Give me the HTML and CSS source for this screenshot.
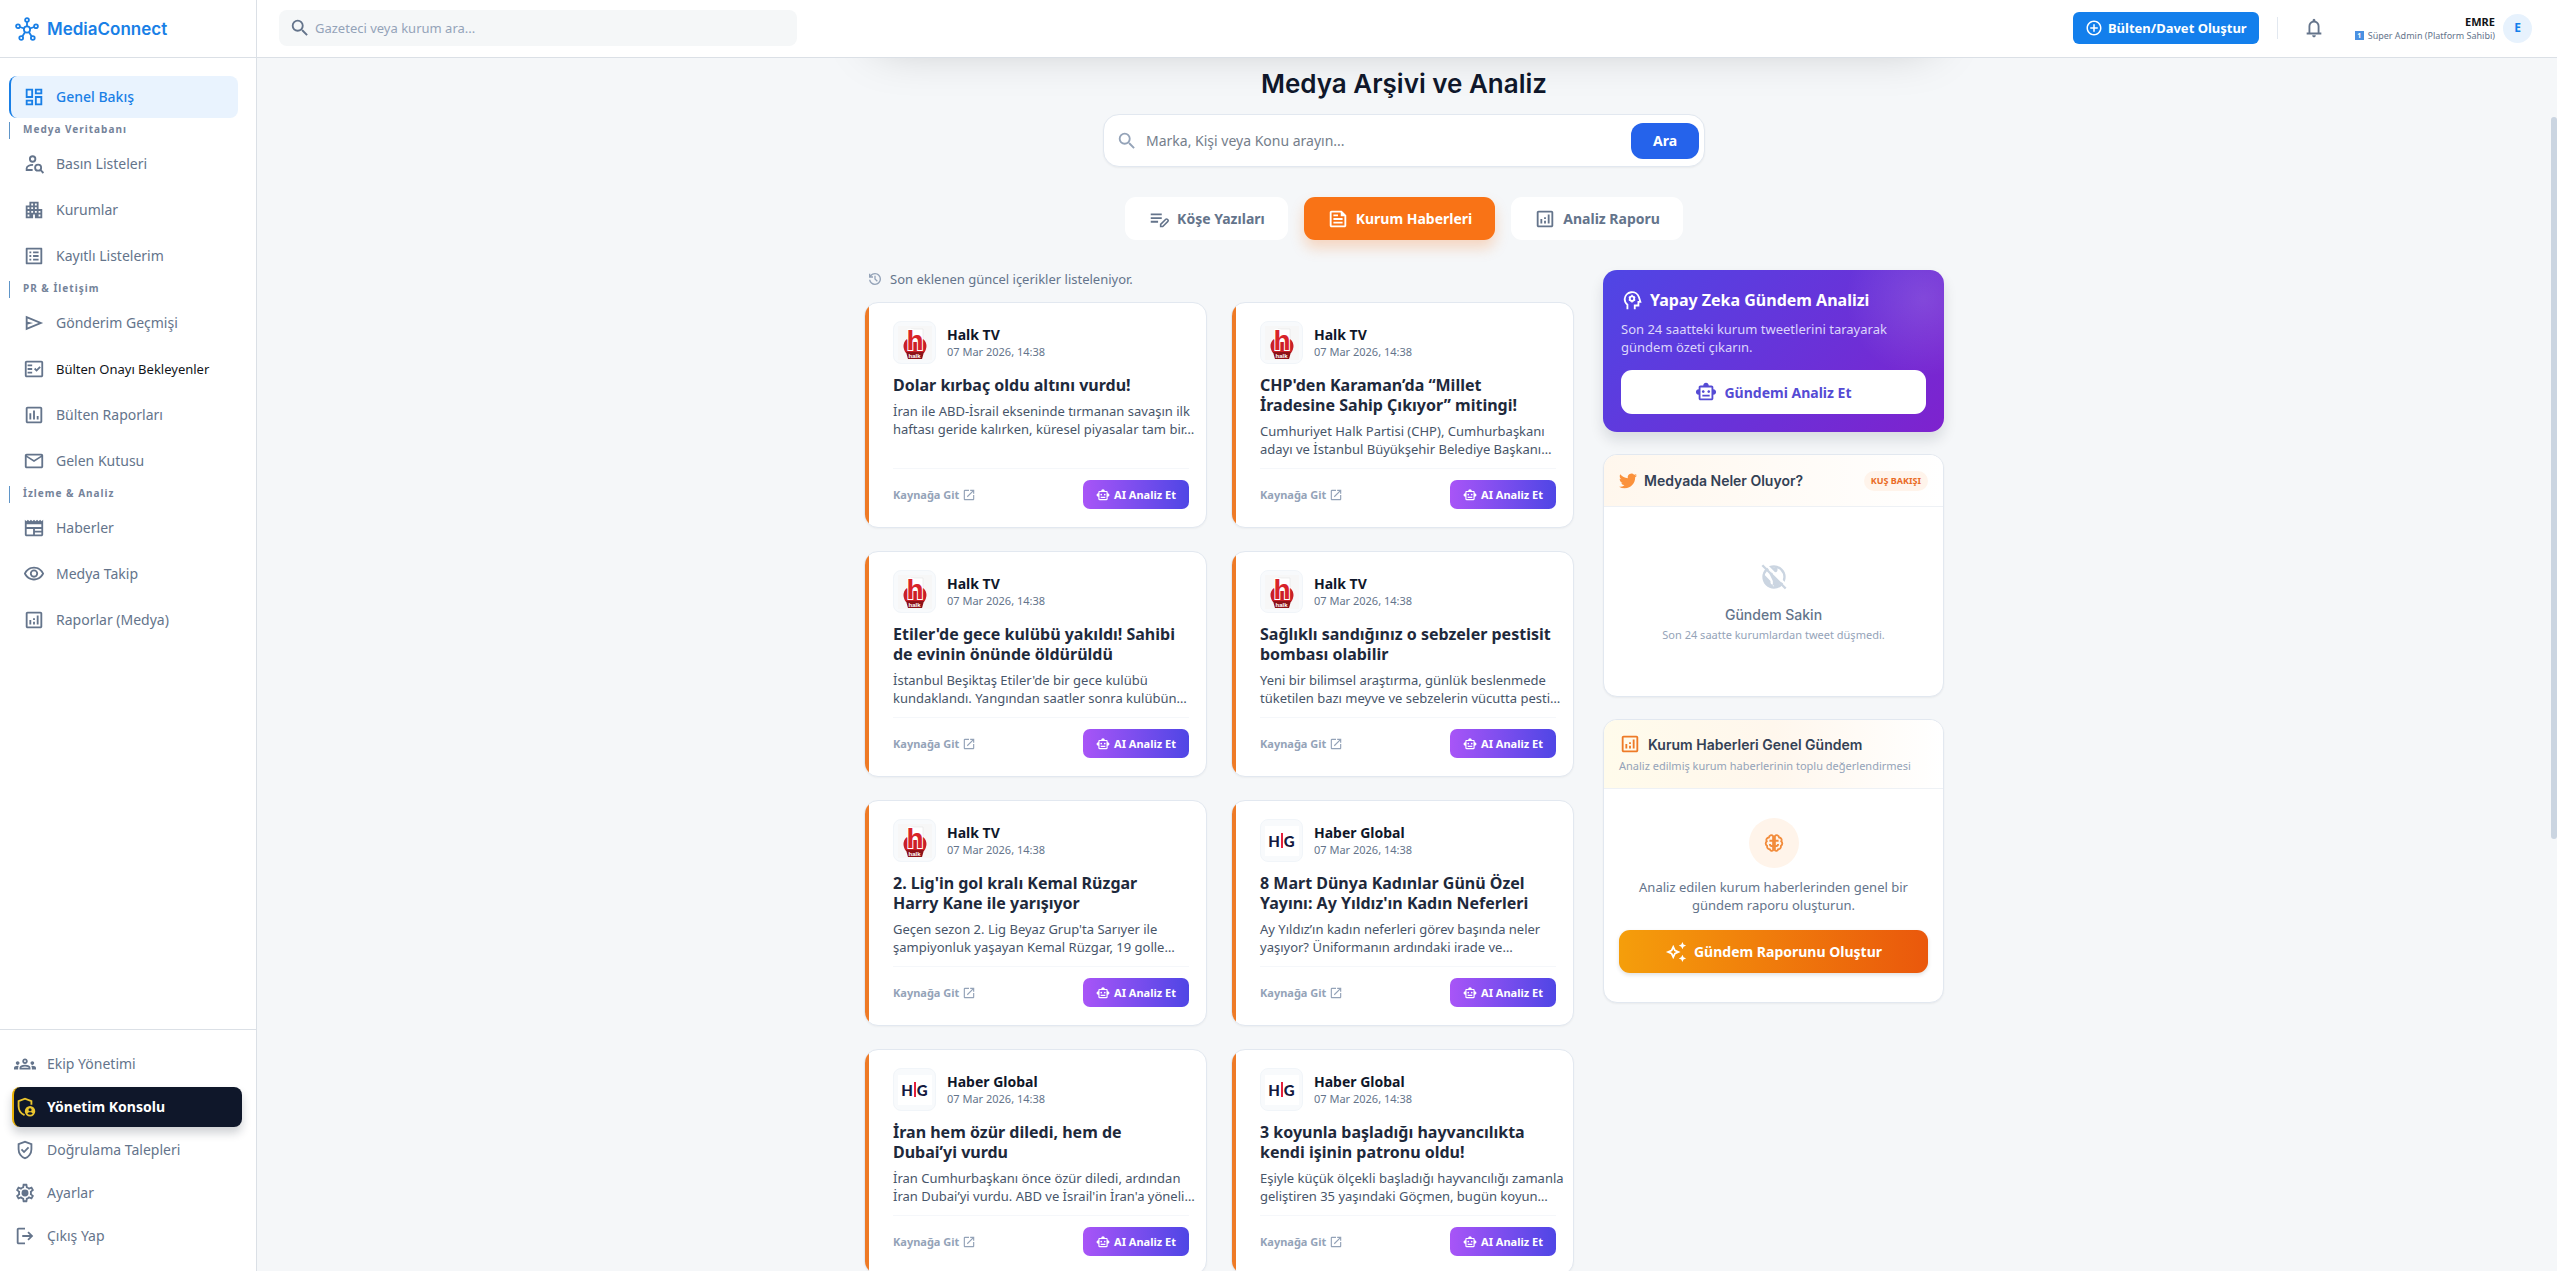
FILE: index.html
```html
<!DOCTYPE html>
<html lang="tr">
<head>
<meta charset="UTF-8">
<meta name="viewport" content="width=device-width, initial-scale=1.0">
<title>MediaConnect - Genel Bakış</title>
<link rel="stylesheet" href="styles.css">
</head>
<body>
<!-- icon set -->
<svg class="sprite" aria-hidden="true">
    <symbol id="i-hub" viewBox="0 0 24 24"><g fill="none" stroke="currentColor" stroke-width="1.8"><circle cx="12" cy="12.5" r="3.1"/><circle cx="12" cy="3" r="1.9"/><circle cx="3" cy="9.3" r="1.9"/><circle cx="21" cy="9.3" r="1.9"/><circle cx="6.2" cy="21" r="1.9"/><circle cx="17.8" cy="21" r="1.9"/><path d="M12 5v4.4M4.9 10l4.2 1.5M19.100 10l-4.200 1.500M7.300 19.400l2.800-4.300M16.700 19.400l-2.800-4.300"/></g></symbol>
    <symbol id="i-search" viewBox="0 0 24 24"><path d="M15.500 14h-.79l-.28-.27A6.471 6.471 0 0 0 16 9.500 6.500 6.500 0 1 0 9.500 16c1.610 0 3.090-.59 4.230-1.570l.27.28v.79l5 4.990L20.490 19l-4.990-5zm-6 0C7.010 14 5 11.990 5 9.500S7.010 5 9.500 5 14 7.010 14 9.500 11.990 14 9.500 14z"/></symbol>
    <symbol id="i-dashboard" viewBox="0 0 24 24"><path d="M19 5v2h-4V5h4M9 5v6H5V5h4m10 8v6h-4v-6h4M9 17v2H5v-2h4M21 3h-8v6h8V3zM11 3H3v10h8V3zm10 8h-8v10h8V11zm-10 4H3v6h8v-6z"/></symbol>
    <symbol id="i-person-search" viewBox="0 0 24 24"><g fill="none" stroke="currentColor" stroke-width="2"><circle cx="10.500" cy="6.500" r="3"/><path d="M11 13c-3.500-.2-7 1.500-7 3.600V18.500h6.500"/><circle cx="16.500" cy="16" r="3.300"/><path d="M19 18.500l3.300 3.300"/></g></symbol>
    <symbol id="i-building" viewBox="0 0 24 24"><path d="M17 11V3H7v4H3v14h8v-4h2v4h8V11h-4zM7 19H5v-2h2v2zm0-4H5v-2h2v2zm0-4H5V9h2v2zm4 4H9v-2h2v2zm0-4H9V9h2v2zm0-4H9V5h2v2zm4 8h-2v-2h2v2zm0-4h-2V9h2v2zm0-4h-2V5h2v2zm4 12h-2v-2h2v2zm0-4h-2v-2h2v2z"/></symbol>
    <symbol id="i-list" viewBox="0 0 24 24"><path d="M19 5v14H5V5h14m1.100-2H3.900c-.5 0-.9.4-.9.9v16.200c0 .4.4.9.9.9h16.200c.4 0 .9-.5.9-.9V3.900c0-.5-.5-.9-.9-.9zM11 7h6v2h-6V7zm0 4h6v2h-6v-2zm0 4h6v2h-6zM7 7h2v2H7zm0 4h2v2H7zm0 4h2v2H7z"/></symbol>
    <symbol id="i-send" viewBox="0 0 24 24"><path d="M3 20V4l19 8-19 8zm2-3 11.850-5L5 7v3.500l6 1.500-6 1.500V17z"/></symbol>
    <symbol id="i-check" viewBox="0 0 24 24"><path d="M20 3H4c-1.100 0-2 .9-2 2v14c0 1.100.9 2 2 2h16c1.100 0 2-.9 2-2V5c0-1.100-.9-2-2-2zm0 16H4V5h16v14zM19.410 10.420 17.990 9l-3.170 3.170-1.410-1.420L12 12.160 14.820 15zM5 7h5v2H5zm0 4h5v2H5zm0 4h5v2H5z"/></symbol>
    <symbol id="i-chart" viewBox="0 0 24 24"><path d="M9 17H7v-7h2v7zm4 0h-2V7h2v10zm4 0h-2v-4h2v4zm2 2H5V5h14v14zm0-16H5c-1.100 0-2 .9-2 2v14c0 1.100.9 2 2 2h14c1.100 0 2-.9 2-2V5c0-1.100-.9-2-2-2z"/></symbol>
    <symbol id="i-mail" viewBox="0 0 24 24"><path d="M22 6c0-1.100-.9-2-2-2H4c-1.100 0-2 .9-2 2v12c0 1.100.9 2 2 2h16c1.100 0 2-.9 2-2V6zm-2 0-8 5-8-5h16zm0 12H4V8l8 5 8-5v10z"/></symbol>
    <symbol id="i-news" viewBox="0 0 24 24"><path d="M22 3l-1.670 1.670L18.670 3 17 4.670 15.330 3l-1.660 1.670L12 3l-1.670 1.670L8.670 3 7 4.670 5.330 3 3.670 4.670 2 3v16c0 1.100.9 2 2 2h16c1.100 0 2-.9 2-2V3zM11 19H4v-6h7v6zm9 0h-7v-2h7v2zm0-4h-7v-2h7v2zm0-4H4V8h16v3z"/></symbol>
    <symbol id="i-eye" viewBox="0 0 24 24"><path d="M12 6c3.790 0 7.170 2.130 8.820 5.500C19.170 14.870 15.790 17 12 17s-7.170-2.130-8.820-5.500C4.830 8.130 8.210 6 12 6m0-2C7 4 2.730 7.110 1 11.500 2.730 15.890 7 19 12 19s9.270-3.110 11-7.500C21.270 7.110 17 4 12 4zm0 5a2.500 2.500 0 0 1 0 5 2.500 2.500 0 0 1 0-5m0-2c-2.480 0-4.500 2.020-4.500 4.500S9.520 16 12 16s4.500-2.020 4.500-4.500S14.480 7 12 7z"/></symbol>
    <symbol id="i-analytics" viewBox="0 0 24 24"><path d="M19 3H5c-1.100 0-2 .9-2 2v14c0 1.100.9 2 2 2h14c1.100 0 2-.9 2-2V5c0-1.100-.9-2-2-2zm0 16H5V5h14v14zM7 12h2v5H7zm8-5h2v10h-2zm-4 7h2v3h-2zm0-4h2v2h-2z"/></symbol>
    <symbol id="i-groups" viewBox="0 0 24 24"><path d="M4 13c1.100 0 2-.9 2-2s-.9-2-2-2-2 .9-2 2 .9 2 2 2zm1.130 1.100C4.760 14.040 4.390 14 4 14c-.99 0-1.930.21-2.780.58C.48 14.900 0 15.620 0 16.430V18h4.500v-1.610c0-.83.23-1.610.63-2.290zM20 13c1.100 0 2-.9 2-2s-.9-2-2-2-2 .9-2 2 .9 2 2 2zm4 3.430c0-.81-.48-1.530-1.220-1.850C21.930 14.210 20.990 14 20 14c-.39 0-.76.04-1.130.1.4.68.63 1.460.63 2.290V18H24v-1.570zM16.240 13.650C15.070 13.130 13.630 12.750 12 12.750s-3.070.39-4.240.9C6.680 14.130 6 15.210 6 16.390V18h12v-1.610c0-1.180-.68-2.260-1.760-2.740zM8.070 16c.09-.23.13-.39.91-.69.97-.38 1.990-.56 3.020-.56s2.050.18 3.020.56c.77.3.81.46.91.69H8.070zM12 8c.55 0 1 .45 1 1s-.45 1-1 1-1-.45-1-1 .45-1 1-1m0-2c-1.660 0-3 1.340-3 3s1.340 3 3 3 3-1.340 3-3-1.340-3-3-3z"/></symbol>
    <symbol id="i-admin" viewBox="0 0 24 24"><path fill="none" stroke="currentColor" stroke-width="2" d="M19 9.500V5.700L12 3 5 5.700v5.400c0 4.500 2.500 8 6.500 9.700"/><path fill-rule="evenodd" d="M17.500 11a5.700 5.700 0 1 0 0 11.400 5.700 5.700 0 0 0 0-11.400zm0 2.300a1.700 1.700 0 1 1 0 3.400 1.700 1.700 0 0 1 0-3.400zm0 4.400c1.200 0 2.200.5 2.900 1.300a3.600 3.600 0 0 1-5.800 0c.7-.8 1.700-1.300 2.900-1.300z"/></symbol>
    <symbol id="i-verified" viewBox="0 0 24 24"><path d="M10.950 15.550 16.600 9.900l-1.425-1.425L10.950 12.700 8.850 10.600 7.425 12.025zM12 22q-3.475-.875-5.738-3.988T4 11.100V5l8-3 8 3v6.100q0 3.800-2.262 6.913T12 22m0-2.100q2.600-.825 4.300-3.300t1.700-5.500V6.375l-6-2.250-6 2.250V11.100q0 3.025 1.700 5.500t4.300 3.300"/></symbol>
    <symbol id="i-settings" viewBox="0 0 24 24"><path d="M19.430 12.980c.04-.32.07-.64.07-.98 0-.34-.03-.66-.07-.98l2.110-1.650c.19-.15.24-.42.12-.64l-2-3.460a.5.5 0 0 0-.61-.22l-2.490 1c-.52-.4-1.080-.73-1.690-.98l-.38-2.650A.488.488 0 0 0 14 2h-4c-.25 0-.46.18-.49.42l-.38 2.650c-.61.25-1.170.59-1.690.98l-2.490-1a.566.566 0 0 0-.18-.03c-.17 0-.34.09-.43.25l-2 3.460c-.13.22-.07.49.12.64l2.110 1.650c-.04.32-.07.65-.07.98 0 .33.03.66.07.98l-2.110 1.650c-.19.15-.24.42-.12.64l2 3.460a.5.5 0 0 0 .61.22l2.490-1c.52.4 1.080.73 1.690.98l.38 2.650c.03.24.24.42.49.42h4c.25 0 .46-.18.49-.42l.38-2.650c.61-.25 1.170-.59 1.690-.98l2.490 1c.06.02.12.03.18.03.17 0 .34-.09.43-.25l2-3.460c.12-.22.07-.49-.12-.64l-2.110-1.650zm-1.980-1.710c.04.31.05.52.05.73 0 .21-.02.43-.05.73l-.14 1.130.89.7 1.080.84-.7 1.210-1.270-.51-1.040-.42-.9.68c-.43.32-.84.56-1.250.73l-1.060.43-.16 1.130-.2 1.350h-1.400l-.19-1.350-.16-1.130-1.060-.43c-.43-.18-.83-.41-1.230-.71l-.91-.7-1.060.43-1.270.51-.7-1.210 1.080-.84.89-.7-.14-1.130c-.03-.31-.05-.54-.05-.74s.02-.43.05-.73l.14-1.130-.89-.7-1.080-.84.7-1.210 1.270.51 1.040.42.9-.68c.43-.32.84-.56 1.250-.73l1.060-.43.16-1.130.2-1.350h1.390l.19 1.350.16 1.130 1.060.43c.43.18.83.41 1.230.71l.91.7 1.060-.43 1.270-.51.7 1.210-1.070.85-.89.7.14 1.130z"/><circle cx="12" cy="12" r="3.800"/></symbol>
    <symbol id="i-logout" viewBox="0 0 24 24"><path d="M5 21q-.825 0-1.412-.587T3 19V5q0-.825.588-1.412T5 3h7v2H5v14h7v2zm11-4-1.375-1.450 2.550-2.550H9v-2h8.175l-2.550-2.550L16 7l5 5z"/></symbol>
    <symbol id="i-add" viewBox="0 0 24 24"><path d="M13 7h-2v4H7v2h4v4h2v-4h4v-2h-4V7zm-1-5C6.480 2 2 6.480 2 12s4.480 10 10 10 10-4.480 10-10S17.520 2 12 2zm0 18c-4.410 0-8-3.590-8-8s3.590-8 8-8 8 3.590 8 8-3.590 8-8 8z"/></symbol>
    <symbol id="i-bell" viewBox="0 0 24 24"><path d="M4 19v-2h2v-7q0-2.075 1.250-3.687T10.500 4.200v-.7q0-.625.438-1.062T12 2t1.063.438T13.500 3.500v.7q2 .5 3.250 2.113T18 10v7h2v2zm8 3q-.825 0-1.412-.587T10 20h4q0 .825-.587 1.413T12 22m-4-5h8v-7q0-1.650-1.175-2.825T12 6 9.175 7.175 8 10z"/></symbol>
    <symbol id="i-edit-note" viewBox="0 0 24 24"><path d="M3 10h12v2H3v-2zm0-4h12v2H3V6zm0 8h8v2H3v-2z"/><path fill="none" stroke="currentColor" stroke-width="1.700" d="M13.800 20.200v-2.300l5.600-5.600c.5-.5 1.300-.5 1.700 0l.6.6c.5.5.5 1.200 0 1.700l-5.600 5.600z"/></symbol>
    <symbol id="i-feed" viewBox="0 0 24 24"><path d="M16 3H5c-1.100 0-2 .9-2 2v14c0 1.100.9 2 2 2h14c1.100 0 2-.9 2-2V8l-5-5zm3 16H5V5h10v4h4v10zM7 17h10v-2H7v2zm5-10H7v2h5V7zm-5 6h10v-2H7v2z"/></symbol>
    <symbol id="i-history" viewBox="0 0 24 24"><path d="M12 21q-3.450 0-6.012-2.287T3.050 13H5.100q.35 2.600 2.313 4.300T12 19q2.925 0 4.963-2.037T19 12t-2.037-4.962T12 5q-1.725 0-3.225.8T6.250 8H9v2H3V4h2v2.350q1.275-1.600 3.113-2.475T12 3q1.875 0 3.513.713t2.850 1.924 1.925 2.850T21 12t-.712 3.513-1.925 2.850-2.850 1.925T12 21m2.800-4.800L11 12.400V7h2v4.600l3.200 3.200z"/></symbol>
    <symbol id="i-open" viewBox="0 0 24 24"><path d="M5 21q-.825 0-1.412-.587T3 19V5q0-.825.588-1.412T5 3h7v2H5v14h14v-7h2v7q0 .825-.587 1.413T19 21zm4.700-5.300-1.400-1.400L17.600 5H14V3h7v7h-2V6.400z"/></symbol>
    <symbol id="i-robot" viewBox="0 0 24 24"><path d="M20 9V7c0-1.100-.9-2-2-2h-3c0-1.660-1.340-3-3-3S9 3.340 9 5H6c-1.100 0-2 .9-2 2v2c-1.660 0-3 1.340-3 3s1.340 3 3 3v4c0 1.100.9 2 2 2h12c1.100 0 2-.9 2-2v-4c1.660 0 3-1.340 3-3s-1.340-3-3-3zm-2 10H6V7h12v12zm-9-6c-.83 0-1.500-.67-1.500-1.500S8.170 10 9 10s1.500.67 1.500 1.500S9.830 13 9 13zm7.500-1.500c0 .83-.67 1.500-1.500 1.500s-1.500-.67-1.500-1.500.67-1.500 1.500-1.500 1.500.67 1.500 1.500zM8 15h8v2H8v-2z"/></symbol>
    <symbol id="i-psychology" viewBox="0 0 24 24"><g fill="none" stroke="currentColor" stroke-width="2"><path d="M7 22v-4.800C5 15.600 4 13.500 4 11a8 8 0 0 1 15.600-2l1.500 5H19v4h-4v4"/><circle cx="12" cy="10.500" r="2.400"/><path stroke-width="1.600" d="M12 6.400v1.800M12 12.800v1.800M8.500 8.500l1.600.9M13.900 11.600l1.600.9M8.500 12.500l1.600-.9M13.900 9.400l1.600-.9"/></g></symbol>
    <symbol id="i-bird" viewBox="0 0 24 24"><path d="M23.953 4.570a10 10 0 0 1-2.825.775 4.958 4.958 0 0 0 2.163-2.723c-.951.555-2.005.959-3.127 1.184a4.920 4.920 0 0 0-8.384 4.482C7.690 8.095 4.067 6.130 1.640 3.162a4.822 4.822 0 0 0-.666 2.475c0 1.710.87 3.213 2.188 4.096a4.904 4.904 0 0 1-2.228-.616v.06a4.923 4.923 0 0 0 3.946 4.827 4.996 4.996 0 0 1-2.212.085 4.936 4.936 0 0 0 4.604 3.417 9.867 9.867 0 0 1-6.102 2.105c-.39 0-.779-.023-1.170-.067a13.995 13.995 0 0 0 7.557 2.209c9.053 0 13.998-7.496 13.998-13.985 0-.21 0-.42-.015-.63A9.935 9.935 0 0 0 24 4.590z"/></symbol>
    <symbol id="i-public-off" viewBox="0 0 24 24"><circle cx="12" cy="12" r="9" fill="none" stroke="currentColor" stroke-width="2"/><path d="M8 4h7v2c0 1.100-.9 2-2 2h-2v2zM3.200 9.500 9 15.500v1c0 1.100.9 2 2 2v3c-5-.5-8.500-5-7.800-12zM8 9h2l7 7v3l-4 2.500-2-3v-3z"/><path stroke="#fff" stroke-width="2" d="M4.300.8l19 19"/><path stroke="currentColor" stroke-width="2" d="M2 1.900 22 21.900"/></symbol>
    <symbol id="i-brain" viewBox="0 0 24 24"><g fill="none" stroke="currentColor" stroke-width="2" stroke-linejoin="round"><path d="M11 4.500C9.500 2.500 6.500 3.500 6.500 6 4 6 3 8.500 4.200 10.200 2.500 11.500 2.500 14 4.500 15c-.5 2.500 1.300 4 3 3.800.5 2 2.500 2.200 3.500 1.200zM13 4.500c1.500-2 4.500-1 4.500 1.500C20 6 21 8.500 19.800 10.200c1.700 1.300 1.700 3.800-.3 4.800.5 2.500-1.300 4-3 3.800-.5 2-2.500 2.200-3.500 1.200z"/><path d="M11 9.500H7M13 9.500h4M11 15.500c-1.500 0-3.500-.5-3.500-2.500M13 15.500c1.500 0 3.500-.5 3.500-2.500"/></g></symbol>
    <symbol id="i-sparkle" viewBox="0 0 24 24"><path d="M19 9l1.250-2.750L23 5l-2.750-1.250L19 1l-1.250 2.750L15 5l2.750 1.250zm0 6-1.250 2.750L15 19l2.750 1.250L19 23l1.250-2.750L23 19l-2.750-1.250zM11.500 9.500 9 4 6.500 9.500 1 12l5.500 2.500L9 20l2.500-5.500L17 12zm-1.510 3.490L9 15.170l-.99-2.180L5.830 12l2.180-.99L9 8.830l.99 2.180 2.180.99z"/></symbol>
    <symbol id="logo-halk" viewBox="0 0 34 34"><rect width="34" height="34" fill="#f7f7f7"/><path fill="#fff" stroke="#ddd" stroke-width=".5" d="M13 3h12v14H13z"/><path fill="#c91f26" d="M9 13c-5 4-4 10-1 14h18c3-4 4-10-1-14l-3 3H12z"/><path fill="#8e1218" d="M8 26h18l-2 7H10z"/></symbol>
</svg>

<div class="app">
    <aside class="sidebar">
        <a class="brand" href="#"><svg class="icon icon-24"><use href="#i-hub"/></svg><span>MediaConnect</span></a>
        <nav class="nav">
            <a class="nav-item active" href="#"><svg class="icon icon-22"><use href="#i-dashboard"/></svg>Genel Bakış</a>
            <h2 class="nav-label">Medya Veritabanı</h2>
            <a class="nav-item" href="#"><svg class="icon icon-22"><use href="#i-person-search"/></svg>Basın Listeleri</a>
            <a class="nav-item" href="#"><svg class="icon icon-22"><use href="#i-building"/></svg>Kurumlar</a>
            <a class="nav-item" href="#"><svg class="icon icon-22"><use href="#i-list"/></svg>Kayıtlı Listelerim</a>
            <h2 class="nav-label">PR &amp; İletişim</h2>
            <a class="nav-item" href="#"><svg class="icon icon-22"><use href="#i-send"/></svg>Gönderim Geçmişi</a>
            <a class="nav-item" href="#"><svg class="icon icon-22"><use href="#i-check"/></svg><span class="pending">Bülten Onayı Bekleyenler</span></a>
            <a class="nav-item" href="#"><svg class="icon icon-22"><use href="#i-chart"/></svg>Bülten Raporları</a>
            <a class="nav-item" href="#"><svg class="icon icon-22"><use href="#i-mail"/></svg>Gelen Kutusu</a>
            <h2 class="nav-label">İzleme &amp; Analiz</h2>
            <a class="nav-item" href="#"><svg class="icon icon-22"><use href="#i-news"/></svg>Haberler</a>
            <a class="nav-item" href="#"><svg class="icon icon-22"><use href="#i-eye"/></svg>Medya Takip</a>
            <a class="nav-item" href="#"><svg class="icon icon-22"><use href="#i-analytics"/></svg>Raporlar (Medya)</a>
        </nav>
        <nav class="nav-bottom">
            <a class="bottom-item" href="#"><svg class="icon icon-22"><use href="#i-groups"/></svg>Ekip Yönetimi</a>
            <a class="bottom-item console" href="#"><svg class="icon icon-22"><use href="#i-admin"/></svg>Yönetim Konsolu</a>
            <a class="bottom-item" href="#"><svg class="icon icon-22"><use href="#i-verified"/></svg>Doğrulama Talepleri</a>
            <a class="bottom-item" href="#"><svg class="icon icon-22"><use href="#i-settings"/></svg>Ayarlar</a>
            <a class="bottom-item" href="#"><svg class="icon icon-22"><use href="#i-logout"/></svg>Çıkış Yap</a>
        </nav>
    </aside>

    <div class="page">
        <header class="topbar">
            <label class="top-search">
                <svg class="icon icon-22"><use href="#i-search"/></svg>
                <input type="text" placeholder="Gazeteci veya kurum ara..." aria-label="Gazeteci veya kurum ara">
            </label>
            <div class="top-actions">
                <button class="btn-create"><svg class="icon icon-18"><use href="#i-add"/></svg>Bülten/Davet Oluştur</button>
                <span class="divider"></span>
                <button class="btn-bell" aria-label="Bildirimler"><svg class="icon icon-22"><use href="#i-bell"/></svg></button>
                <div class="user">
                    <div class="user-text">
                        <span class="user-name">EMRE</span>
                        <span class="user-role"><span class="level">1</span>Süper Admin (Platform Sahibi)</span>
                    </div>
                    <span class="avatar">E</span>
                </div>
            </div>
        </header>

        <main class="main">
            <div class="content">
                <section class="hero"></section>
                <h1 class="title">Medya Arşivi ve Analiz</h1>
                <form class="search">
                    <svg class="icon icon-22"><use href="#i-search"/></svg>
                    <input type="text" placeholder="Marka, Kişi veya Konu arayın..." aria-label="Marka, Kişi veya Konu arayın">
                    <button type="button">Ara</button>
                </form>
                <div class="tabs">
                    <button class="tab"><svg class="icon icon-22"><use href="#i-edit-note"/></svg>Köşe Yazıları</button>
                    <button class="tab active"><svg class="icon icon-22"><use href="#i-feed"/></svg>Kurum Haberleri</button>
                    <button class="tab"><svg class="icon icon-22"><use href="#i-analytics"/></svg>Analiz Raporu</button>
                </div>

                <div class="columns">
                    <section class="feed">
                        <p class="status"><svg class="icon icon-16"><use href="#i-history"/></svg>Son eklenen güncel içerikler listeleniyor.</p>
                        <div class="cards">
                            <article class="card">
                                <div class="source"><span class="logo"><span class="logo-halk"><svg><use href="#logo-halk"/></svg><b>h</b><small>halk</small></span></span><div><h3>Halk TV</h3><time>07 Mar 2026, 14:38</time></div></div>
                                <h4>Dolar kırbaç oldu altını vurdu!</h4>
                                <p>İran ile ABD-İsrail ekseninde tırmanan savaşın ilk haftası geride kalırken, küresel piyasalar tam bir…</p>
                                <div class="card-foot"><a href="#">Kaynağa Git<svg class="icon icon-14"><use href="#i-open"/></svg></a><button><svg class="icon icon-14"><use href="#i-robot"/></svg>AI Analiz Et</button></div>
                            </article>
                            <article class="card">
                                <div class="source"><span class="logo"><span class="logo-halk"><svg><use href="#logo-halk"/></svg><b>h</b><small>halk</small></span></span><div><h3>Halk TV</h3><time>07 Mar 2026, 14:38</time></div></div>
                                <h4>CHP'den Karaman’da “Millet İradesine Sahip Çıkıyor” mitingi!</h4>
                                <p>Cumhuriyet Halk Partisi (CHP), Cumhurbaşkanı adayı ve İstanbul Büyükşehir Belediye Başkanı…</p>
                                <div class="card-foot"><a href="#">Kaynağa Git<svg class="icon icon-14"><use href="#i-open"/></svg></a><button><svg class="icon icon-14"><use href="#i-robot"/></svg>AI Analiz Et</button></div>
                            </article>
                            <article class="card">
                                <div class="source"><span class="logo"><span class="logo-halk"><svg><use href="#logo-halk"/></svg><b>h</b><small>halk</small></span></span><div><h3>Halk TV</h3><time>07 Mar 2026, 14:38</time></div></div>
                                <h4>Etiler'de gece kulübü yakıldı! Sahibi de evinin önünde öldürüldü</h4>
                                <p>İstanbul Beşiktaş Etiler'de bir gece kulübü kundaklandı. Yangından saatler sonra kulübün…</p>
                                <div class="card-foot"><a href="#">Kaynağa Git<svg class="icon icon-14"><use href="#i-open"/></svg></a><button><svg class="icon icon-14"><use href="#i-robot"/></svg>AI Analiz Et</button></div>
                            </article>
                            <article class="card">
                                <div class="source"><span class="logo"><span class="logo-halk"><svg><use href="#logo-halk"/></svg><b>h</b><small>halk</small></span></span><div><h3>Halk TV</h3><time>07 Mar 2026, 14:38</time></div></div>
                                <h4>Sağlıklı sandığınız o sebzeler pestisit bombası olabilir</h4>
                                <p>Yeni bir bilimsel araştırma, günlük beslenmede tüketilen bazı meyve ve sebzelerin vücutta pesti…</p>
                                <div class="card-foot"><a href="#">Kaynağa Git<svg class="icon icon-14"><use href="#i-open"/></svg></a><button><svg class="icon icon-14"><use href="#i-robot"/></svg>AI Analiz Et</button></div>
                            </article>
                            <article class="card">
                                <div class="source"><span class="logo"><span class="logo-halk"><svg><use href="#logo-halk"/></svg><b>h</b><small>halk</small></span></span><div><h3>Halk TV</h3><time>07 Mar 2026, 14:38</time></div></div>
                                <h4>2. Lig'in gol kralı Kemal Rüzgar<br>Harry Kane ile yarışıyor</h4>
                                <p>Geçen sezon 2. Lig Beyaz Grup'ta Sarıyer ile şampiyonluk yaşayan Kemal Rüzgar, 19 golle…</p>
                                <div class="card-foot"><a href="#">Kaynağa Git<svg class="icon icon-14"><use href="#i-open"/></svg></a><button><svg class="icon icon-14"><use href="#i-robot"/></svg>AI Analiz Et</button></div>
                            </article>
                            <article class="card">
                                <div class="source"><span class="logo"><span class="logo-hg">H<i></i>G</span></span><div><h3>Haber Global</h3><time>07 Mar 2026, 14:38</time></div></div>
                                <h4>8 Mart Dünya Kadınlar Günü Özel Yayını: Ay Yıldız'ın Kadın Neferleri</h4>
                                <p>Ay Yıldız’ın kadın neferleri görev başında neler yaşıyor? Üniformanın ardındaki irade ve…</p>
                                <div class="card-foot"><a href="#">Kaynağa Git<svg class="icon icon-14"><use href="#i-open"/></svg></a><button><svg class="icon icon-14"><use href="#i-robot"/></svg>AI Analiz Et</button></div>
                            </article>
                            <article class="card">
                                <div class="source"><span class="logo"><span class="logo-hg">H<i></i>G</span></span><div><h3>Haber Global</h3><time>07 Mar 2026, 14:38</time></div></div>
                                <h4>İran hem özür diledi, hem de Dubai’yi vurdu</h4>
                                <p>İran Cumhurbaşkanı önce özür diledi, ardından<br>İran Dubai’yi vurdu. ABD ve İsrail'in İran'a yöneli…</p>
                                <div class="card-foot"><a href="#">Kaynağa Git<svg class="icon icon-14"><use href="#i-open"/></svg></a><button><svg class="icon icon-14"><use href="#i-robot"/></svg>AI Analiz Et</button></div>
                            </article>
                            <article class="card">
                                <div class="source"><span class="logo"><span class="logo-hg">H<i></i>G</span></span><div><h3>Haber Global</h3><time>07 Mar 2026, 14:38</time></div></div>
                                <h4>3 koyunla başladığı hayvancılıkta kendi işinin patronu oldu!</h4>
                                <p>Eşiyle küçük ölçekli başladığı hayvancılığı zamanla geliştiren 35 yaşındaki Göçmen, bugün koyun…</p>
                                <div class="card-foot"><a href="#">Kaynağa Git<svg class="icon icon-14"><use href="#i-open"/></svg></a><button><svg class="icon icon-14"><use href="#i-robot"/></svg>AI Analiz Et</button></div>
                            </article>
                        </div>
                    </section>

                    <aside class="side">
                        <section class="ai-box">
                            <h2><svg class="icon icon-22"><use href="#i-psychology"/></svg>Yapay Zeka Gündem Analizi</h2>
                            <p>Son 24 saatteki kurum tweetlerini tarayarak gündem özeti çıkarın.</p>
                            <button><svg class="icon icon-22"><use href="#i-robot"/></svg>Gündemi Analiz Et</button>
                        </section>
                        <section class="panel">
                            <div class="panel-head media-head">
                                <h2><svg class="icon icon-18"><use href="#i-bird"/></svg>Medyada Neler Oluyor?</h2>
                                <span class="tag">KUŞ BAKIŞI</span>
                            </div>
                            <div class="empty">
                                <svg class="icon icon-28"><use href="#i-public-off"/></svg>
                                <h3>Gündem Sakin</h3>
                                <p>Son 24 saatte kurumlardan tweet düşmedi.</p>
                            </div>
                        </section>
                        <section class="panel">
                            <div class="panel-head report-head">
                                <h2><svg class="icon icon-22"><use href="#i-analytics"/></svg>Kurum Haberleri Genel Gündem</h2>
                                <p>Analiz edilmiş kurum haberlerinin toplu değerlendirmesi</p>
                            </div>
                            <div class="report">
                                <span class="round"><svg class="icon icon-22"><use href="#i-brain"/></svg></span>
                                <p>Analiz edilen kurum haberlerinden genel bir gündem raporu oluşturun.</p>
                                <button><svg class="icon icon-22"><use href="#i-sparkle"/></svg>Gündem Raporunu Oluştur</button>
                            </div>
                        </section>
                    </aside>
                </div>
            </div>
        </main>
        <div class="scroll-thumb"></div>
    </div>
</div>
</body>
</html>
```

FILE: styles.css
```css
* {
    box-sizing: border-box;
}

body {
    margin: 0;
    font-family: "Noto Sans", sans-serif;
    font-size: 14px;
    color: #0f172a;
    background-color: #f5f7f9;
}

h1, h2, h3, h4, p {
    margin: 0;
}

a {
    color: inherit;
    text-decoration: none;
}

button, input {
    font-family: inherit;
    border: none;
    padding: 0;
}

button {
    cursor: pointer;
}

input {
    background: none;
    outline: none;
    min-width: 0;
    flex: 1;
}

.sprite {
    position: absolute;
    width: 0;
    height: 0;
}

.icon {
    display: block;
    flex-shrink: 0;
    fill: currentColor;
}

.icon-14 { width: 14px; height: 14px; }
.icon-16 { width: 16px; height: 16px; }
.icon-18 { width: 18px; height: 18px; }
.icon-22 { width: 22px; height: 22px; }
.icon-24 { width: 24px; height: 24px; }
.icon-28 { width: 28px; height: 28px; }

.app {
    display: flex;
    height: 100vh;
    overflow: hidden;
}

/* sidebar */
.sidebar {
    display: flex;
    flex-direction: column;
    flex-shrink: 0;
    width: 257px;
    background-color: #fff;
    border-right: 1px solid #dbe0e6;
}

.brand {
    display: flex;
    align-items: center;
    gap: 8px;
    height: 58px;
    padding-left: 15px;
    border-bottom: 1px solid #dbe0e6;
    color: #197fe6;
    font-family: Inter, sans-serif;
    font-size: 17px;
    font-weight: 600;
}

.nav {
    display: flex;
    flex-direction: column;
    gap: 4px;
    flex: 1;
    padding: 18px 18px 0 9px;
}

.nav-item {
    display: flex;
    align-items: center;
    gap: 11px;
    height: 42px;
    padding: 0 0 1px 12px;
    border-left: 2px solid transparent;
    border-radius: 8px;
    color: #64748b;
}

.nav-item.active {
    background-color: #e9f3fe;
    border-left-color: #197fe6;
    color: #197fe6;
    font-weight: 500;
}

.pending {
    font-size: 13px;
    color: #111418;
}

.nav-label {
    height: 17px;
    padding-left: 13px;
    border-left: 1px solid #5f95c8;
    font-size: 10px;
    line-height: 15px;
    letter-spacing: 1px;
    color: #75839a;
}

.nav-bottom {
    display: flex;
    flex-direction: column;
    gap: 3px;
    padding: 14px 14px 15px 12px;
    border-top: 1px solid #dbe0e6;
}

.bottom-item {
    display: flex;
    align-items: center;
    gap: 11px;
    height: 40px;
    padding-bottom: 1px;
    border-left: 2px solid transparent;
    border-radius: 8px;
    color: #64748b;
}

.bottom-item.console {
    background-color: #0f172a;
    border-left-color: #eab308;
    box-shadow: 0 6px 10px rgba(15, 23, 42, 0.2);
    color: #fff;
    font-weight: 700;
}

.bottom-item.console .icon {
    color: #eac52f;
}

/* top bar */
.page {
    position: relative;
    display: flex;
    flex-direction: column;
    flex: 1;
    min-width: 0;
}

.topbar {
    display: flex;
    align-items: center;
    justify-content: space-between;
    flex-shrink: 0;
    height: 58px;
    padding: 0 25px 1px 22px;
    background-color: #fff;
    border-bottom: 1px solid #dbe0e6;
}

.top-search {
    display: flex;
    align-items: center;
    gap: 4px;
    width: 518px;
    height: 36px;
    padding: 0 10px;
    background-color: #f5f7f8;
    border-radius: 8px;
    color: #64748b;
}

.top-search input {
    font-size: 13px;
}

.top-search input::placeholder {
    color: #94a3b8;
}

.top-actions {
    display: flex;
    align-items: center;
}

.btn-create {
    display: flex;
    align-items: center;
    gap: 5px;
    height: 32px;
    padding: 0 12px;
    background-color: #137fec;
    border-radius: 6px;
    color: #fff;
    font-size: 13px;
    font-weight: 700;
}

.divider {
    width: 1px;
    height: 22px;
    margin: 0 25px 0 18px;
    background-color: #e2e8f0;
}

.btn-bell {
    background: none;
    color: #64748b;
}

.user {
    display: flex;
    align-items: center;
    gap: 8px;
    margin-left: 30px;
}

.user-text {
    display: flex;
    flex-direction: column;
    align-items: flex-end;
}

.user-name {
    font-size: 11px;
    line-height: 15px;
    font-weight: 700;
    color: #111418;
}

.user-role {
    display: flex;
    align-items: center;
    gap: 4px;
    font-size: 9px;
    line-height: 14px;
    color: #64748b;
}

.level {
    width: 9px;
    height: 9px;
    background-color: #4a90e2;
    color: #fff;
    font-size: 7px;
    line-height: 9px;
    font-weight: 700;
    text-align: center;
}

.avatar {
    width: 29px;
    height: 29px;
    border-radius: 50%;
    background-color: #e7f2fd;
    color: #137fec;
    font-size: 12px;
    line-height: 28px;
    font-weight: 700;
    text-align: center;
}

.scroll-thumb {
    position: absolute;
    top: 117px;
    right: 0;
    width: 6px;
    height: 722px;
    background-color: #cbd5e1;
    border-radius: 3px;
}

/* main area, right padding is the scrollbar track */
.main {
    flex: 1;
    min-height: 0;
    padding-right: 6px;
    overflow: hidden;
}

.content {
    max-width: 1080px;
    margin: -227px auto 0;
}

.hero {
    height: 200px;
    border-radius: 24px;
    box-shadow: 0 25px 50px -12px rgba(0, 0, 0, 0.25);
}

.title {
    padding-top: 34px;
    font-family: Inter, sans-serif;
    font-size: 26px;
    line-height: 38px;
    font-weight: 600;
    text-align: center;
}

.search {
    display: flex;
    align-items: center;
    gap: 8px;
    max-width: 602px;
    height: 53px;
    margin: 11px auto 0;
    padding: 0 5px 0 12px;
    background-color: #fff;
    border: 1px solid #e2e8f0;
    border-radius: 16px;
    box-shadow: 0 1px 2px rgba(0, 0, 0, 0.05);
    color: #94a3b8;
}

.search input {
    font-size: 14px;
}

.search input::placeholder {
    color: #757e8b;
}

.search button {
    width: 68px;
    height: 36px;
    background-color: #2563eb;
    border-radius: 12px;
    color: #fff;
    font-size: 14px;
    font-weight: 700;
}

.tabs {
    display: flex;
    justify-content: center;
    gap: 16px;
    margin-top: 30px;
}

.tab {
    display: flex;
    align-items: center;
    gap: 7px;
    height: 43px;
    padding: 0 23px;
    background-color: #fff;
    border-radius: 11px;
    color: #64748b;
    font-size: 14px;
    font-weight: 700;
}

.tab.active {
    background-color: #f97316;
    box-shadow: 0 8px 14px rgba(249, 115, 22, 0.25);
    color: #fff;
}

.columns {
    display: flex;
    align-items: flex-start;
    gap: 29px;
    margin-top: 30px;
}

.feed {
    flex: 1;
    min-width: 0;
}

.status {
    display: flex;
    align-items: center;
    gap: 7px;
    height: 18px;
    margin-bottom: 14px;
    padding-left: 3px;
    color: #64748b;
    font-size: 13px;
}

.status .icon {
    color: #94a3b8;
}

.cards {
    display: grid;
    grid-template-columns: 1fr 1fr;
    gap: 23px 24px;
}

.card {
    position: relative;
    display: flex;
    flex-direction: column;
    padding: 18px 17px 18px 28px;
    overflow: hidden;
    background-color: #fff;
    border: 1px solid #e2e8f0;
    border-radius: 14px;
    box-shadow: 0 1px 2px rgba(0, 0, 0, 0.04);
}

.card::before {
    content: "";
    position: absolute;
    inset: 0 auto 0 0;
    width: 4px;
    background-color: #ee7a26;
}

.source {
    display: flex;
    align-items: center;
    gap: 11px;
}

.logo {
    display: flex;
    align-items: center;
    justify-content: center;
    width: 43px;
    height: 43px;
    background-color: #f8fafc;
    border: 1px solid #f1f5f9;
    border-radius: 8px;
}

.logo-halk {
    position: relative;
    width: 34px;
    height: 34px;
    font-family: "Liberation Sans", sans-serif;
}

.logo-halk svg {
    display: block;
    width: 34px;
    height: 34px;
}

.logo-halk b {
    position: absolute;
    top: 0;
    left: 9px;
    color: #d8232a;
    font-size: 28px;
    line-height: 30px;
    -webkit-text-stroke: 2px #fff;
    paint-order: stroke;
}

.logo-halk small {
    position: absolute;
    bottom: 1px;
    left: 0;
    width: 34px;
    color: #fff;
    font-size: 6px;
    line-height: 6px;
    font-weight: 700;
    text-align: center;
}

.logo-hg {
    display: flex;
    align-items: center;
    justify-content: center;
    width: 34px;
    height: 30px;
    background-color: #fff;
    color: #14193f;
    font-family: Lato, sans-serif;
    font-size: 15px;
    font-weight: 900;
}

.logo-hg i {
    width: 2px;
    height: 15px;
    margin: 0 1px;
    background-color: #e5203c;
}

.card h3 {
    font-size: 14px;
    line-height: 18px;
    font-weight: 700;
}

.card time {
    display: block;
    color: #64748b;
    font-size: 11px;
    line-height: 16px;
}

.card h4 {
    margin-top: 11px;
    color: #1e293b;
    font-size: 16px;
    line-height: 20px;
    font-weight: 700;
}

.card p {
    margin: 7px -10px 10px 0;
    color: #475569;
    font-size: 13px;
    line-height: 18px;
}

.card-foot {
    display: flex;
    align-items: center;
    justify-content: space-between;
    margin-top: auto;
    padding-top: 11px;
    border-top: 1px solid #f5f7fa;
}

.card-foot a {
    display: flex;
    align-items: center;
    gap: 3px;
    color: #94a3b8;
    font-size: 11px;
    font-weight: 700;
}

.card-foot button {
    display: flex;
    align-items: center;
    gap: 4px;
    height: 29px;
    padding: 0 13px;
    background-image: linear-gradient(to right, #a855f7, #4f46e5);
    border-radius: 7px;
    color: #fff;
    font-size: 11px;
    font-weight: 700;
}

/* right column */
.side {
    display: flex;
    flex-direction: column;
    gap: 22px;
    flex-shrink: 0;
    width: 341px;
}

.ai-box {
    padding: 18px;
    background-image: radial-gradient(circle at 94% 18%, rgba(255, 255, 255, 0.13), transparent 78px), linear-gradient(135deg, #4f46e5, #7e22ce);
    border-radius: 14px;
    box-shadow: 0 8px 14px rgba(15, 23, 42, 0.12);
    color: #fff;
}

.ai-box h2 {
    display: flex;
    align-items: center;
    gap: 7px;
    height: 24px;
    font-size: 16px;
}

.ai-box p {
    margin: 8px 0 14px;
    color: #dcd6fb;
    font-size: 13px;
    line-height: 18px;
}

.ai-box button {
    display: flex;
    align-items: center;
    justify-content: center;
    gap: 7px;
    width: 100%;
    height: 44px;
    background-color: #fff;
    border-radius: 11px;
    color: #554bd4;
    font-size: 14px;
    font-weight: 700;
}

.panel {
    overflow: hidden;
    background-color: #fff;
    border: 1px solid #e2e8f0;
    border-radius: 14px;
    box-shadow: 0 1px 2px rgba(0, 0, 0, 0.05);
}

.panel-head {
    padding: 0 15px;
    border-bottom: 1px solid #eef1f5;
}

.panel-head h2 {
    display: flex;
    align-items: center;
    gap: 7px;
    color: #334155;
    font-family: Inter, sans-serif;
    font-size: 14px;
    font-weight: 600;
}

.media-head {
    display: flex;
    align-items: center;
    justify-content: space-between;
    height: 52px;
    background-image: linear-gradient(to right, #fff7ed, #fff);
}

.media-head .icon {
    color: #fb923c;
}

.tag {
    padding: 0 7px;
    background-color: #fff4eb;
    border-radius: 10px;
    color: #ea6a24;
    font-size: 9px;
    line-height: 20px;
    font-weight: 700;
}

.empty {
    display: flex;
    flex-direction: column;
    align-items: center;
    height: 189px;
    padding-top: 56px;
    color: #cbd5e1;
}

.empty h3 {
    margin-top: 13px;
    color: #64748b;
    font-family: Inter, sans-serif;
    font-size: 14px;
    line-height: 22px;
    font-weight: 500;
}

.empty p {
    color: #94a3b8;
    font-size: 11px;
    line-height: 18px;
}

.report-head {
    height: 69px;
    padding-top: 13px;
    background-image: linear-gradient(to right, #fffbeb, #fff7ed, #fff);
}

.report-head .icon {
    color: #ee7a26;
}

.report-head p {
    margin-top: 3px;
    color: #94a3b8;
    font-size: 11px;
    line-height: 16px;
}

.report {
    display: flex;
    flex-direction: column;
    align-items: center;
    padding: 29px 15px;
}

.round {
    display: flex;
    align-items: center;
    justify-content: center;
    width: 50px;
    height: 50px;
    border-radius: 50%;
    background-color: #fff4ea;
    color: #f28c3c;
}

.report p {
    margin: 10px 0 16px;
    padding: 0 10px;
    color: #64748b;
    font-size: 13px;
    line-height: 18px;
    text-align: center;
}

.report button {
    display: flex;
    align-items: center;
    justify-content: center;
    gap: 7px;
    width: 100%;
    height: 43px;
    background-image: linear-gradient(to right, #f59e0b, #ea580c);
    border-radius: 11px;
    box-shadow: 0 2px 4px rgba(0, 0, 0, 0.12);
    color: #fff;
    font-size: 14px;
    font-weight: 700;
}
```
